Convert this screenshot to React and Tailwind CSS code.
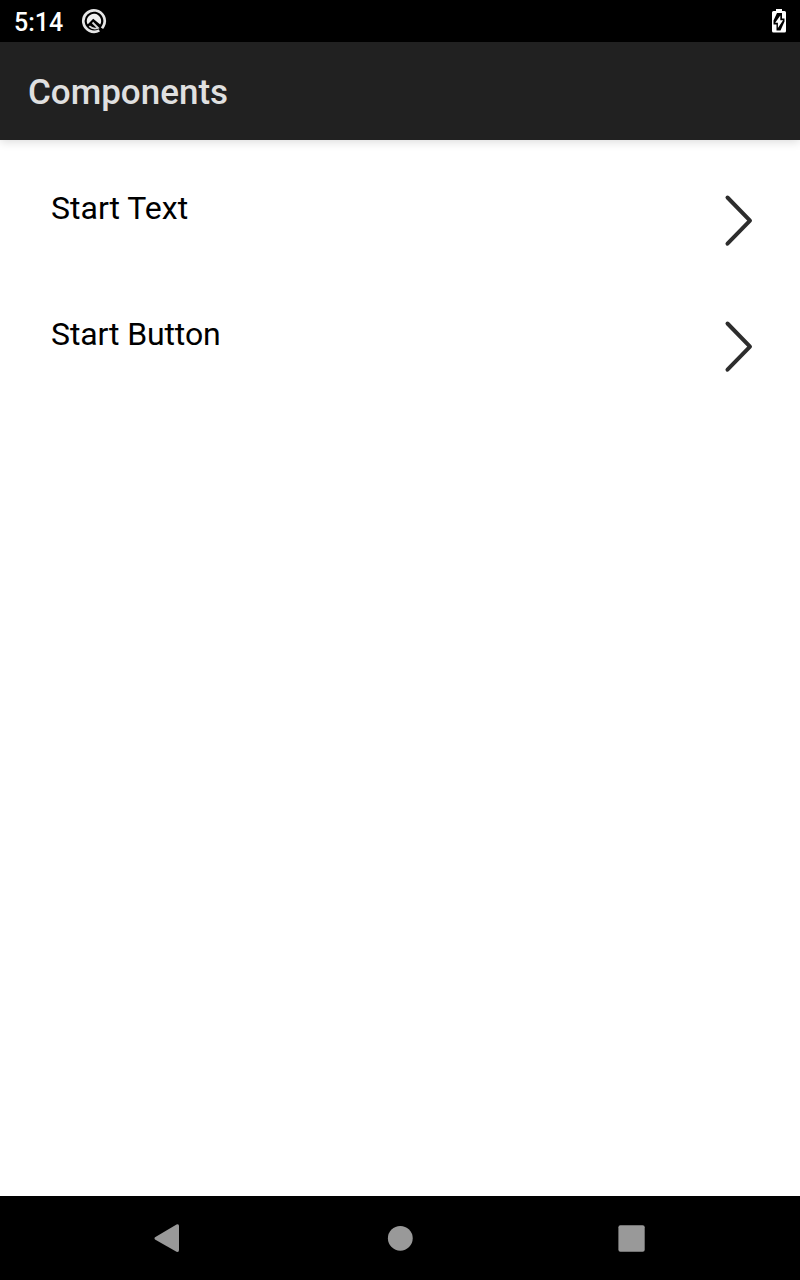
function StatusBar() {
  return (
    <header className="flex h-[42px] shrink-0 items-center bg-black pl-[14px] pr-[14px] text-white">
      <span className="mt-[3px] text-[25px] leading-[30px] font-medium">5:14</span>
      <svg className="ml-[18px] h-[26px] w-[26px]" viewBox="0 0 26 26" fill="none">
        <path d="M18.300 22.300A10.700 10.700 0 1 1 22.300 18.300L21 20.200" stroke="#e6e6e6" strokeWidth="2.700" />
        <path d="M6.200 15.500A7.200 7.200 0 1 1 19.200 16.600L12.200 10.800L6.800 16.200Z" fill="#f0f0f0" />
        <path d="M11.500 14.500L17 20Q12 21.800 8.300 18.200" stroke="#d8d8d8" strokeWidth="1.800" />
      </svg>
      <svg className="ml-auto h-[24px] w-[14px]" viewBox="0 0 14 24">
        <path d="M4 0h6v2h2.500q1.500 0 1.500 1.500v18.500q0 1.500-1.500 1.500h-11q-1.500 0-1.500-1.500v-18.500q0-1.500 1.500-1.500H4z" fill="#fff" />
        <path d="M5 4h5v5.500h2.500v3L8.500 21.500H4.500v-6H1.500v-4z" fill="#000" />
        <path d="M8.300 6.500v4.800h2.800L5.900 19v-5.200H3.200z" fill="#fff" />
      </svg>
    </header>
  );
}

function Row({ label, labelClass }) {
  return (
    <li className="flex h-[126px] items-start justify-between pl-[51px] pr-[47px]">
      <span className={`mt-[49px] text-[32px] leading-[38px] text-black ${labelClass}`}>{label}</span>
      <svg className="mt-[54px] h-[54px] w-[29px]" viewBox="0 0 29 54" fill="none" stroke="#2d2d2d" strokeWidth="4" strokeLinecap="round" strokeLinejoin="round">
        <path d="M3.500 3.500L26 26.700L3.500 49.700" />
      </svg>
    </li>
  );
}

export default function App() {
  return (
    <div className="flex h-[1280px] w-[800px] flex-col overflow-hidden bg-white font-['Roboto',sans-serif]">
      <StatusBar />
      <div className="z-10 flex h-[98px] shrink-0 items-center bg-[#212121] pl-7 pt-[3px] shadow-[0_2px_9px_rgba(0,0,0,0.14)]">
        <h1 className="text-[35px] leading-[42px] font-medium text-[#e0e0e0]">Components</h1>
      </div>
      <ul className="flex-1">
        <Row label="Start Text" labelClass="tracking-normal" />
        <Row label="Start Button" labelClass="tracking-[-0.12px]" />
      </ul>
      <nav className="flex h-[84px] shrink-0 items-center justify-between bg-black pl-[154px] pr-[155px]">
        <svg className="h-7 w-[27px]" viewBox="0 0 27 28" fill="#999"><path d="M1 13.300L22.500 0.600Q25 -0.300 25 2V26Q25 28.500 22.500 27.800L1 15.500Q0 14.400 1 13.300Z" /></svg>
        <svg className="h-7 w-[26px]" viewBox="0 0 26 28" fill="#999"><circle cx="13.300" cy="14.300" r="12.400" /></svg>
        <svg className="h-7 w-[27px]" viewBox="0 0 27 28" fill="#999"><rect x="0.400" y="1.300" width="26.300" height="26.400" rx="2" /></svg>
      </nav>
    </div>
  );
}
